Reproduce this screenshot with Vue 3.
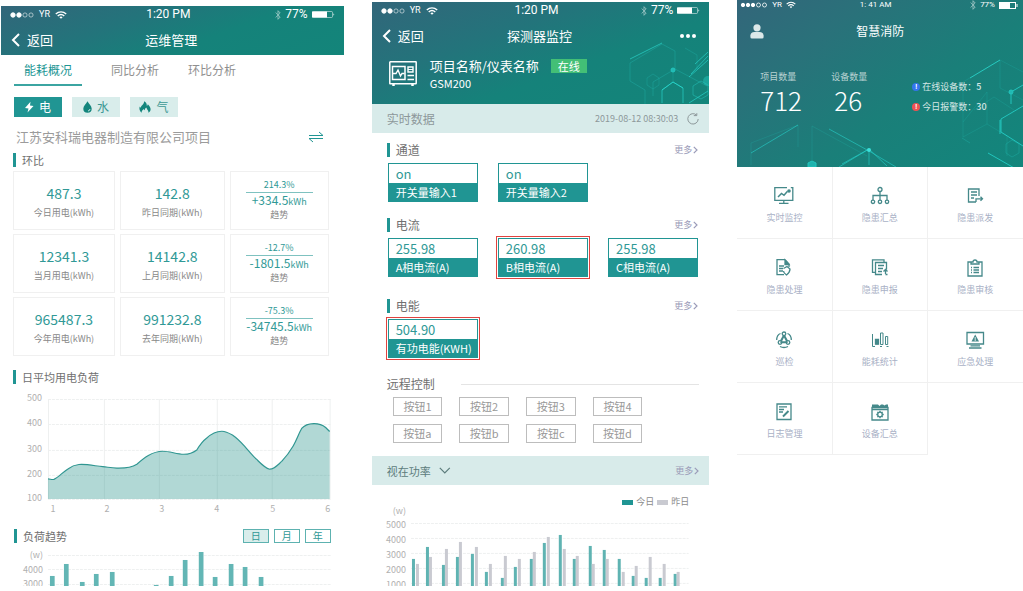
<script setup>
import { ref } from 'vue'

const tabs = ['能耗概况', '同比分析', '环比分析']
const activeTab = ref('能耗概况')
const energies = [
  { id: 'bolt', name: '电' },
  { id: 'drop', name: '水' },
  { id: 'flame', name: '气' }
]
const activeEnergy = ref('bolt')
const periods = ['日', '月', '年']
const activePeriod = ref('日')

const compareRows = [
  { now: '487.3', nowLabel: '今日用电(kWh)', prev: '142.8', prevLabel: '昨日同期(kWh)', rate: '214.3%', diff: '+334.5' },
  { now: '12341.3', nowLabel: '当月用电(kWh)', prev: '14142.8', prevLabel: '上月同期(kWh)', rate: '-12.7%', diff: '-1801.5' },
  { now: '965487.3', nowLabel: '今年用电(kWh)', prev: '991232.8', prevLabel: '去年同期(kWh)', rate: '-75.3%', diff: '-34745.5' }
]

const loadY = [[500, 9], [400, 34], [300, 60], [200, 85], [100, 109]]
const loadX = [[1, 52, 47], [2, 106, 103], [3, 161, 158], [4, 216, 216], [5, 272, 271], [6, 327, 329]]
const curve =
  'M47 89 C49 89 51 90 53 89.5 C58 87 62 82 67 79 C71 76 74 75 78 74.6 C86 74 94 76 102 76.8 C107 77.3 111 78 116 78.2 C123 78.4 130 78 136 74.3 C143 68 151 61.5 162 61.3 C169 61.3 176 64.3 183 64.3 C188 64.3 192 63 196 60 C199 55 202 51 206 48 C211 43.5 215 41.5 221 41.3 C225 41.2 228 43 232 45.3 C236 48 240 52 244 56.5 C248 61 252 66 256 69.5 C260 73.5 264 78 269 79.3 C273 79.5 276 76 281 71.5 C286 66 289 62 292.5 56 C296 50 298 43.5 301 38.5 C304 35 308 33.7 313 33.6 C318 33.5 322 35 325 37.5 L329 41.5'

const trendBars = [
  [51, 30], [65, 18], [81, 36], [95, 28], [111, 26], [155, 39], [170, 30],
  [184, 14], [200, 6], [214, 31], [230, 18], [244, 21], [260, 31]
]

const sections = [
  { title: '通道', items: [
    { value: 'on', label: '开关量输入1' }, { value: 'on', label: '开关量输入2' }
  ] },
  { title: '电流', items: [
    { value: '255.98', label: 'A相电流(A)' },
    { value: '260.98', label: 'B相电流(A)', alarm: true },
    { value: '255.98', label: 'C相电流(A)' }
  ] },
  { title: '电能', items: [{ value: '504.90', label: '有功电能(KWH)', alarm: true }] }
]
const remotes = ['1', '2', '3', '4', 'a', 'b', 'c', 'd'].map((n) => '按钮' + n)
const measure = ref('视在功率')

const powerY = [[5000, 30], [4000, 45], [3000, 60], [2000, 75], [1000, 90]]
const todayBars = [
  [40, 65], [54, 53], [70, 71], [84, 63], [99, 60], [113, 78], [129, 84], [142, 73], [158, 65], [171, 49],
  [187, 41], [201, 65], [217, 52], [231, 56], [246, 65], [260, 82], [273, 84], [287, 84], [302, 80]
]
const yesterdayBars = [
  [44, 70], [57, 63], [73, 55], [87, 48], [103, 53], [117, 70], [132, 62], [146, 65], [161, 58], [175, 43],
  [191, 55], [204, 62], [220, 70], [234, 65], [250, 78], [263, 72], [277, 63], [291, 70], [305, 78]
]

const menu = [
  { id: 'monitor', name: '实时监控' }, { id: 'tree', name: '隐患汇总' }, { id: 'send', name: '隐患派发' },
  { id: 'handle', name: '隐患处理' }, { id: 'report', name: '隐患申报' }, { id: 'review', name: '隐患审核' },
  { id: 'patrol', name: '巡检' }, { id: 'stats', name: '能耗统计' }, { id: 'urgent', name: '应急处理' },
  { id: 'log', name: '日志管理' }, { id: 'device', name: '设备汇总' }
]
</script>

<template>
  <main class="board">
    <!-- 运维管理 -->
    <section class="phone first">
      <header class="head">
        <div class="status">
          <span class="carrier">
            <svg width="24" height="6" viewBox="0 0 24 6" fill="#fff" stroke="#fff"><circle cx="3" cy="3" r="2.2" /><circle cx="9" cy="3" r="2.2" /><g fill="none" stroke-width=".7" opacity=".8"><circle cx="15" cy="3" r="2.1" /><circle cx="21" cy="3" r="2.1" /></g></svg>
            <span class="net">YR</span>
            <svg width="12" height="8" viewBox="0 0 12 8" fill="none" stroke="#fff" stroke-width="1.4"><path d="M.8 3C3.8.2 8.200.2 11.200 3M2.700 5C4.700 3.200 7.300 3.200 9.300 5" /><path d="M6 7.800 4.400 6.200Q6 5 7.600 6.200Z" fill="#fff" stroke="none" /></svg>
          </span>
          <time>1:20 PM</time>
          <span class="power">
            <svg class="dim" width="6" height="10" viewBox="0 0 6 10" fill="none" stroke="#fff" stroke-width=".8"><path d="M.6 2.500 5.200 7 3 9.300V.7L5.200 3 .6 7.500" /></svg>
            <span>77%</span>
            <svg width="23" height="7" viewBox="0 0 23 7"><rect x=".5" y=".5" width="20" height="6" rx="1" fill="none" stroke="#fff" stroke-opacity=".5" /><rect x="0" y=".5" width="15" height="6" fill="#fff" /><path d="M21.500 2.200q1.500 1.300 0 2.600z" fill="#fff" /></svg>
          </span>
        </div>
        <div class="navbar">
          <button class="back" type="button">
            <svg width="9" height="14" viewBox="0 0 9 14" fill="none" stroke="#fff" stroke-width="2"><path d="M8 1 2 7l6 6" /></svg>返回
          </button>
          <h1>运维管理</h1>
        </div>
      </header>

      <nav class="tabs">
        <button v-for="t in tabs" :key="t" type="button" :class="{ on: t === activeTab }" @click="activeTab = t">{{ t }}</button>
      </nav>

      <div class="energies">
        <button v-for="e in energies" :key="e.id" type="button" :class="{ on: e.id === activeEnergy }" @click="activeEnergy = e.id">
          <svg v-if="e.id === 'bolt'" width="9" height="12" viewBox="0 0 9 12"><path d="M5.500.8 0 7l3.500.5L2.500 11.500 8.500 5 5 4.600z" fill="currentColor" /></svg>
          <svg v-else-if="e.id === 'drop'" width="9" height="12" viewBox="0 0 9 12"><path d="M4.500.3C6 3 8.700 5.200 8.700 7.800a4.200 4 0 0 1-8.400 0C.3 5.200 3 3 4.500.3z" fill="#13857c" /><path d="M7 8q-.2 1.800-2 2" fill="none" stroke="#d9edeb" stroke-width=".9" /></svg>
          <svg v-else width="12" height="12" viewBox="0 0 12 12"><path d="M2.600 11.800C.4 10 .1 7.600.7 5.500q.4.9 1 1.300C2 4.200 5.400 3.500 5 .2 7.300 1.300 8 3.200 7.800 5q.9-.5 1-1.800c3 2.600 4.200 6.200.5 8.600C10 8.800 7.500 8.700 7.600 6.500 5.800 7 6 9 5.500 9.200 5 9 5 8.500 5 8 3.500 9 2.600 10 2.600 11.800z" fill="#13857c" /></svg>
          {{ e.name }}
        </button>
      </div>

      <div class="project">
        <span>江苏安科瑞电器制造有限公司项目</span>
        <button type="button" aria-label="切换"><svg width="16" height="12" viewBox="0 0 16 12" fill="none" stroke="#209593"><path d="M1 4.500H15L11 1M15 7.500H1L5 11" /></svg></button>
      </div>

      <h2 class="bar-title">环比</h2>
      <div class="compare">
        <template v-for="r in compareRows" :key="r.now">
          <div class="cell"><b>{{ r.now }}</b><span>{{ r.nowLabel }}</span></div>
          <div class="cell"><b>{{ r.prev }}</b><span>{{ r.prevLabel }}</span></div>
          <div class="cell trend"><em>{{ r.rate }}</em><b>{{ r.diff }}<small>kWh</small></b><span>趋势</span></div>
        </template>
      </div>

      <h2 class="bar-title load">日平均用电负荷</h2>
      <svg class="chart" viewBox="0 0 343 128">
        <g stroke="#eef0f0">
          <path v-for="y in loadY" :key="y[0]" :d="`M47 ${y[1]}.500H330`" stroke-dasharray="3 1" />
          <path v-for="x in loadX" :key="x[0]" :d="`M${x[2]}.500 9V109`" />
        </g>
        <path :d="curve + 'V109H47Z'" fill="#209088" fill-opacity=".35" />
        <path :d="curve" fill="none" stroke="#309691" stroke-width="1.200" />
        <text v-for="y in loadY" :key="'y' + y[0]" x="41" :y="y[1] + 2" text-anchor="end">{{ y[0] }}</text>
        <text v-for="x in loadX" :key="'x' + x[0]" :x="x[1]" y="122" text-anchor="middle">{{ x[0] }}</text>
      </svg>

      <div class="trend-head">
        <h2 class="bar-title">负荷趋势</h2>
        <div class="periods">
          <button v-for="p in periods" :key="p" type="button" :class="{ on: p === activePeriod }" @click="activePeriod = p">{{ p }}</button>
        </div>
      </div>
      <svg class="chart" viewBox="0 0 343 70">
        <path d="M47 9.500H330M47 23.500H330M47 38.500H330" stroke="#eef0f0" stroke-dasharray="3 1" />
        <rect v-for="b in trendBars" :key="b[0]" :x="b[0] - 2" :y="b[1]" width="4.700" :height="70 - b[1]" fill="#63b6b5" />
        <text x="42" y="12" text-anchor="end">(w)</text>
        <text x="42" y="27" text-anchor="end">4000</text>
        <text x="42" y="41" text-anchor="end">3000</text>
      </svg>
    </section>

    <!-- 探测器监控 -->
    <section class="phone second">
      <header class="head">
        <svg class="deco" width="84" height="62" viewBox="0 0 84 62" fill="none" stroke="#23c5bd">
          <path d="M5 21 37 2 50 9M5 21v18l15 9v14M50 9v18l32 17M50 27 28 40v14" opacity=".3" />
          <path d="M37 48 48 40 58 46V61M37 48v13M83 14 66 32" opacity=".8" />
          <path d="M5 17 37 1M37 48 48 40l10 6M70 22 83 10M64 35l19-17M83 49 64 61" stroke="#2be0d6" opacity=".6" />
          <path d="M48 28v12M22 36l6-4 6 4v7l-6 4-6-4zM60 6l12 7v14" opacity=".25" />
          <circle cx="48" cy="28" r="2" fill="#22b9b3" /><circle cx="83" cy="39" r="5" fill="#2be0d6" opacity=".35" stroke="none" />
          <path d="m68 44 8-5 7 4v10l-7 4-8-4z" opacity=".5" />
        </svg>
        <div class="status">
          <span class="carrier">
            <svg width="24" height="6" viewBox="0 0 24 6" fill="#fff" stroke="#fff"><circle cx="3" cy="3" r="2.200" /><circle cx="9" cy="3" r="2.200" /><g fill="none" stroke-width=".7" opacity=".8"><circle cx="15" cy="3" r="2.100" /><circle cx="21" cy="3" r="2.100" /></g></svg>
            <span class="net">YR</span>
            <svg width="12" height="8" viewBox="0 0 12 8" fill="none" stroke="#fff" stroke-width="1.400"><path d="M.8 3C3.800.2 8.200.2 11.200 3M2.700 5C4.700 3.200 7.300 3.200 9.300 5" /><path d="M6 7.800 4.400 6.200Q6 5 7.600 6.200Z" fill="#fff" stroke="none" /></svg>
          </span>
          <time>1:20 PM</time>
          <span class="power">
            <svg class="dim" width="6" height="10" viewBox="0 0 6 10" fill="none" stroke="#fff" stroke-width=".8"><path d="M.6 2.500 5.200 7 3 9.300V.7L5.200 3 .6 7.500" /></svg>
            <span>77%</span>
            <svg width="23" height="7" viewBox="0 0 23 7"><rect x=".5" y=".5" width="20" height="6" rx="1" fill="none" stroke="#fff" stroke-opacity=".5" /><rect x="0" y=".5" width="15" height="6" fill="#fff" /><path d="M21.500 2.200q1.500 1.300 0 2.600z" fill="#fff" /></svg>
          </span>
        </div>
        <div class="navbar">
          <button class="back" type="button">
            <svg width="9" height="14" viewBox="0 0 9 14" fill="none" stroke="#fff" stroke-width="2"><path d="M8 1 2 7l6 6" /></svg>返回
          </button>
          <h1>探测器监控</h1>
          <button class="dots" type="button" aria-label="菜单"><svg width="18" height="6" viewBox="0 0 18 6" fill="#fff"><circle cx="3" cy="3" r="2" /><circle cx="9" cy="3" r="2" /><circle cx="15" cy="3" r="2" /></svg></button>
        </div>
        <div class="device">
          <svg width="28" height="26" viewBox="0 0 28 26" fill="none" stroke="#fff" stroke-width="1.500"><rect x=".8" y=".8" width="26.400" height="22" rx=".5" /><path d="M4.500 23v2M23.500 23v2" stroke-width="2.500" /><path d="M3.500 5.500h12.500v13H3.500z" /><path d="M3.500 12.500h3.500l2-3.500 2.500 6 1.500-2.500h2.500M19 6h5v5h-5zM18.500 14.500H25M18.500 18.500H25" stroke-width="1.400" /><path d="M19 8.500h5" stroke-width="1" /></svg>
          <div>
            <p class="dev-name">项目名称/仪表名称<span class="online">在线</span></p>
            <p class="model">GSM200</p>
          </div>
        </div>
      </header>

      <div class="strip live">
        <span class="live-title">实时数据</span>
        <time>2019-08-12 08:30:03</time>
        <button type="button" aria-label="刷新"><svg width="12" height="12" viewBox="0 0 12 12" fill="none" stroke="#8d989a"><path d="M9.500 2A5.200 5.200 0 1 0 11.200 6M6.800 2.600h3V.2" /></svg></button>
      </div>

      <div v-for="s in sections" :key="s.title" class="group">
        <div class="group-head">
          <h2 class="bar-title">{{ s.title }}</h2>
          <a class="more" href="#">更多<svg width="5" height="8" viewBox="0 0 5 8" fill="none" stroke="currentColor" stroke-width="1.200"><path d="m.8.8 3.200 3.200-3.200 3.200" /></svg></a>
        </div>
        <div class="meters">
          <div v-for="m in s.items" :key="m.label" class="meter" :class="{ alarm: m.alarm }"><b>{{ m.value }}</b><span>{{ m.label }}</span></div>
        </div>
      </div>

      <div class="remote-head"><h2>远程控制</h2><hr></div>
      <div class="remotes"><button v-for="r in remotes" :key="r" type="button">{{ r }}</button></div>

      <div class="strip">
        <span class="picker">
          <select v-model="measure" aria-label="指标"><option>视在功率</option></select>
          <svg width="12" height="7" viewBox="0 0 12 7" fill="none" stroke="#5c7c7c" stroke-width="1.200"><path d="m.8.8 5 5 5-5" /></svg>
        </span>
        <a class="more" href="#">更多<svg width="5" height="8" viewBox="0 0 5 8" fill="none" stroke="currentColor" stroke-width="1.200"><path d="m.8.8 3.200 3.200-3.200 3.200" /></svg></a>
      </div>
      <div class="legend"><i></i>今日<i class="old"></i>昨日</div>
      <svg class="chart power-chart" viewBox="0 0 338 110">
        <g stroke="#eef0f0" stroke-dasharray="3 1"><path v-for="y in powerY" :key="y[0]" :d="`M39 ${y[1] - 1}.500H317`" /></g>
        <rect v-for="b in todayBars" :key="'t' + b[0]" :x="b[0]" :y="b[1]" width="3" :height="110 - b[1]" fill="#5fb3b2" />
        <rect v-for="b in yesterdayBars" :key="'o' + b[0]" :x="b[0]" :y="b[1]" width="3" :height="110 - b[1]" fill="#c9cad1" />
        <text x="34" y="20" text-anchor="end">(w)</text>
        <text v-for="y in powerY" :key="'l' + y[0]" x="34" :y="y[1] + 4" text-anchor="end">{{ y[0] }}</text>
      </svg>
    </section>

    <!-- 智慧消防 -->
    <section class="phone third">
      <header class="head">
        <svg class="deco" width="285" height="167" viewBox="0 0 285 167" preserveAspectRatio="xMaxYMax slice" fill="none" stroke="#23c5bd">
          <path d="M225 82 262 60 285 72M225 82v55l24-13V92M262 60v28l23 12M249 92l-24 30M249 124l20 12v20M236 110l20-13 20 13" opacity=".18" />
          <path d="m232 78 30-18" stroke="#2be0d6" opacity=".7" />
          <path d="M285 85 273 92v12M285 106l-22 13v13l22 14M250 153l28 16M262 120v14" stroke="#25d5cd" opacity=".8" />
          <path d="m224 138 8 5M268 144l6-4 7 4v9l-7 4-6-4z" opacity=".3" />
          <circle cx="273" cy="92" r="2" fill="#22b9b3" />
          <path d="M13 143 60 125v22M13 143v22M74 160V126l55 30" opacity=".18" />
          <path d="m13 153 47-28M91 129l40 22 27 16M104 164l27-15v16M101 167l30-18 18 17" stroke="#27d0ca" opacity=".6" />
          <path d="m70 163 4-2 4 2v4h-8z" fill="#1fb3ae" />
          <circle cx="131" cy="150" r="2" fill="#3be0da" stroke="none" />
        </svg>
        <div class="status">
          <span class="carrier">
            <svg width="28" height="6" viewBox="0 0 28 6" fill="#fff" stroke="#fff"><circle cx="3" cy="3" r="1.700" /><circle cx="8" cy="3" r="1.700" /><circle cx="13" cy="3" r="1.700" /><g fill="none" stroke-width=".8"><circle cx="18.500" cy="3" r="2" /><circle cx="24.500" cy="3" r="2" /></g></svg>
            <span class="net">YR</span>
            <svg width="10" height="8" viewBox="0 0 12 8" fill="none" stroke="#fff" stroke-width="1.400"><path d="M.8 3C3.800.2 8.200.2 11.200 3M2.700 5C4.700 3.200 7.300 3.200 9.300 5" /><path d="M6 7.800 4.400 6.200Q6 5 7.600 6.200Z" fill="#fff" stroke="none" /></svg>
          </span>
          <time>1: 41 AM</time>
          <span class="power">
            <svg class="dim" width="6" height="10" viewBox="0 0 6 10" fill="none" stroke="#fff" stroke-width=".8"><path d="M.6 2.500 5.200 7 3 9.300V.7L5.200 3 .6 7.500" /></svg>
            <span>77%</span>
            <svg width="19" height="7" viewBox="0 0 19 7"><rect x=".5" y=".5" width="16" height="6" fill="none" stroke="#fff" /><rect x="1" y="1" width="10" height="5" fill="#fff" /><path d="M18 2v3" stroke="#fff" /></svg>
          </span>
        </div>
        <div class="user-bar">
          <button type="button" aria-label="用户"><svg width="14" height="15" viewBox="0 0 14 15" fill="#dce8e9"><circle cx="7" cy="3.800" r="3.600" /><path d="M.4 13V11.500Q.6 8 4.500 8h5q3.900 0 4.100 3.500V13q0 1.500-1.500 1.500H2Q.4 14.500.4 13z" /></svg></button>
          <h1>智慧消防</h1>
        </div>
        <div class="totals">
          <div class="total"><span>项目数量</span><b>712</b></div>
          <div class="total"><span>设备数量</span><b>26</b></div>
          <ul>
            <li><i class="info">!</i>在线设备数：<strong>5</strong></li>
            <li><i>!</i>今日报警数：<strong>30</strong></li>
          </ul>
        </div>
      </header>

      <nav class="menu">
        <a v-for="m in menu" :key="m.id" href="#">
          <svg width="20" height="20" viewBox="0 0 20 20" fill="none" stroke="#45898a" stroke-width="1.300">
            <template v-if="m.id === 'monitor'"><path d="M13 1.600H.8v12.800h18V1.600h-2M9.800 14.500V17M5 17.400h9.500" /><path d="m4 11 3.500-3.500 2.500 1.800 3.500-4" stroke-width="1.500" /><circle cx="15" cy="5" r="1.800" fill="#45898a" stroke="none" /></template>
            <template v-else-if="m.id === 'tree'"><circle cx="10" cy="3.500" r="2" /><path d="M10 5.500V14M3 14V9.500h14V14" /><circle cx="3" cy="15.800" r="1.700" /><circle cx="10" cy="15.800" r="1.700" /><circle cx="17" cy="15.800" r="1.700" /></template>
            <template v-else-if="m.id === 'send'"><path d="M14 10V3H3.500v13H11M6 6h6M6 9h6M6 12h3M11 16v-3.200h6.500M15.500 10.800l2 2-2 2" /></template>
            <template v-else-if="m.id === 'handle'"><path d="M11 1.600H3v15h7M11 1.600 15 6v3M5 8h5M5 10.500h4M5 13h4" /><path d="M11 2v4.500h4z" fill="#45898a" /><path d="M9.500 10.500 13 8.500l3 2.500c0 3-1 4-3.500 6Q9.500 15 9.500 13" /></template>
            <template v-else-if="m.id === 'report'"><path d="M14 4V1.800H2.500v12.500H5M12 16.500H5.500V4.500h11v7M8 7.500h6M8 10.500h5M8 13.500h4M15.500 16v-4.500m-2 2 2-2 2 2M17.500 16.500h-2" /></template>
            <template v-else-if="m.id === 'review'"><path d="M6 4H3v14h14V4h-3M6 6V4h2q0-2 2-2t2 2h2v2zM6 9.500h1M8.500 9.500H14M6 12h1M8.500 12H14M6 14.500h1M8.500 14.500H14" /></template>
            <template v-else-if="m.id === 'patrol'"><circle cx="10" cy="3.800" r="1.800" /><circle cx="6" cy="12.500" r="1.800" /><circle cx="14" cy="12.500" r="1.800" /><path d="M9.500 5.500 6.500 11M10.500 5.500l3 5.500M10 6l-3 6h6zM7.800 12.500h4.500M2.700 10Q2.700 5 6.500 3.500M17.300 10q0-5-3.800-6.500M6 16.500q4 2 8 0" /></template>
            <template v-else-if="m.id === 'stats'"><path d="M2.500 4v12.500H5M5.500 9.500h3v4.500h-3zM10.500 3h2.500v11.500h-2.500zM15.500 6.500h2.200v8h-2.200zM10 16.500h2M16.500 16.500h2" stroke-width="1" /><path d="M5.500 9.500h3V14h-3z" fill="#45898a" /></template>
            <template v-else-if="m.id === 'urgent'"><path d="M2 2.500h16.500v11.500H2zM5.500 15.800h9.500M4 18h12.500" /><path d="m10.200 4.500 3.800 7H6.500z" fill="#45898a" stroke="none" /><path d="M10.200 7v4" stroke="#fff" stroke-width=".8" /></template>
            <template v-else-if="m.id === 'log'"><path d="M3 2h14v15.500H3zM5 4.800h8M5 7.500h5M5 10h4" /><path d="m9 14.500 5.500-5.500" stroke-width="2" /></template>
            <template v-else><path d="M2 5.500h16V18H2zM2 7.500h16" /><path d="M2 2.500h6l1.500 1.500L11 2.500h2l1.500 1L16 2.500h2v3H2z" fill="#45898a" stroke="none" /><circle cx="10" cy="12.500" r="2.300" /><path d="M10 8.800v1.500M10 14.700v1.500M6.300 12.500h1.500M12.200 12.500h1.500M7.400 9.900l1 1M11.600 14.100l1 1M12.600 9.900l-1 1M8.400 14.100l-1 1" /></template>
          </svg>
          {{ m.name }}
        </a>
      </nav>
    </section>
  </main>
</template>

<style>
body { margin: 0; background: #fff; }
</style>

<style scoped>
* { box-sizing: border-box; margin: 0; padding: 0; }
.board {
  display: grid; grid-template-columns: 343fr 338fr 286fr; column-gap: 28px;
  height: 100vh; padding: 0 0 5px 1px; overflow: hidden;
  font-family: "Noto Sans CJK SC", sans-serif; font-weight: 400; color: #8f8f8f;
}
.phone { min-width: 0; min-height: 0; overflow: hidden; }
.first { margin-top: 6px; }
.second { margin-top: 2px; }
button, select { font: inherit; color: inherit; background: none; border: 0; border-radius: 0; cursor: pointer; }
a { text-decoration: none; color: inherit; }
svg { display: block; flex: none; }
h1, h2, b, em, i { font-weight: 400; font-style: normal; }

.head { position: relative; overflow: hidden; color: #fff; background: linear-gradient(160deg, #32667a 0%, #23747b 35%, #15827a 62%, #13857a 100%); }
.first .head { height: 49px; }
.second .head { height: 102px; }
.third .head { height: 167px; background: linear-gradient(145deg, #33667a 0%, #2a717a 25%, #1a7f79 60%, #12867c 100%); }
.deco { position: absolute; right: 0; bottom: 0; }
.status { position: relative; display: grid; grid-template-columns: 136fr auto 144fr; align-items: center; height: 17px; padding: 0 9px; font: 400 12px/17px Roboto, sans-serif; }
.carrier, .power { display: flex; align-items: center; }
.carrier { gap: 5px; }
.net { font-size: 9px; }
.power { justify-content: flex-end; gap: 4px; }
.dim { opacity: .6; }
.third .status { height: 10px; padding: 0 5px 0 3px; font: 400 8px/10px Roboto, sans-serif; }
.third .net { font-size: 8px; }
.third .carrier { gap: 4px; }

.navbar { position: relative; display: grid; grid-template-columns: 1fr auto 1fr; align-items: center; height: 34px; padding: 0 12px 0 10px; }
.navbar h1 { font-size: 13px; line-height: 20px; }
.back { display: flex; align-items: center; gap: 7px; font-size: 13px; line-height: 20px; }
.dots { justify-self: end; }

.tabs { display: flex; padding: 0 13px; height: 31px; }
.tabs button { font-size: 12px; line-height: 30px; padding: 0 10px; margin-right: 9px; border-bottom: 2px solid transparent; }
.tabs button + button { margin-left: 10px; }
.tabs button + button + button { margin-left: 0; }
.tabs .on { color: #209593; border-color: #3ba5a2; }
.energies { display: flex; gap: 10px; padding: 11px 13px 0; }
.energies button { display: flex; align-items: center; justify-content: center; gap: 5px; width: 48px; height: 20px; font-size: 12px; line-height: 20px; background: #d9edeb; color: #3c9894; }
.energies .on { background: #209593; color: #fff; }
.project { display: flex; justify-content: space-between; align-items: center; padding: 10px 20px 0 15px; font-size: 13px; line-height: 20px; color: #9b9b9b; }
.bar-title { border-left: 3px solid #209593; padding-left: 6px; font-size: 11px; line-height: 14px; color: #707070; }
.first > .bar-title { margin: 6px 0 0 12px; }
.compare { display: grid; grid-template-columns: 102fr 105fr 99fr; gap: 4px 5px; padding: 4px 15px 0 12px; }
.cell { display: flex; flex-direction: column; align-items: center; height: 59px; padding-top: 11px; border: 1px solid #f0f0f0; }
.cell b { font-size: 14px; line-height: 20px; color: #309996; }
.cell span { margin-top: 3px; font-size: 9px; line-height: 14px; color: #888; }
.trend { padding-top: 6px; }
.cell em { width: 67px; border-bottom: 1px solid #7fc2c0; font-size: 9px; line-height: 14px; text-align: center; color: #309996; }
.trend b { font-size: 12px; line-height: 13px; }
.trend small { font-size: 9px; }
.trend span { margin-top: 0; }
.first > .load { margin-top: 14px; }
.chart { width: 100%; height: auto; }
.chart text { font-size: 9px; fill: #b0b0b0; }
.load + .chart { margin-top: 6px; }
.trend-head { display: flex; justify-content: space-between; align-items: center; margin-top: 11px; padding: 0 13px; }
.periods { display: flex; gap: 5px; }
.periods button { width: 26px; height: 14px; border: 1px solid #5db2b0; font-size: 10px; line-height: 12px; color: #309996; }
.periods .on { background: #d9edeb; }
.trend-head + .chart { margin-top: 3px; }

.device { position: relative; display: flex; align-items: center; gap: 13px; height: 42px; padding: 0 17px; }
.dev-name { display: flex; align-items: center; gap: 12px; font-size: 13px; line-height: 18px; }
.online { width: 36px; height: 14px; background: #43bf76; font-size: 11px; line-height: 14px; text-align: center; }
.model { font-size: 11px; line-height: 16px; }
.strip { display: flex; align-items: center; height: 29px; padding: 0 10px 0 15px; background: #d8ebea; color: #5c7c7c; }
.live { gap: 9px; color: #8d989a; }
.live-title { flex: 1; font-size: 12px; }
.live time { font-size: 9px; }
.group { padding: 10px 11px 0 15px; }
.group + .group { padding-top: 16px; }
.group + .group + .group { padding-top: 22px; }
.group-head { display: flex; justify-content: space-between; align-items: center; }
.group .bar-title { font-size: 12px; }
.more { display: flex; align-items: center; gap: 1px; font-size: 9px; line-height: 14px; color: #9a9bb8; }
.meters { display: grid; grid-template-columns: repeat(3, 90fr); gap: 20px; margin-top: 6px; padding-left: 1px; }
.meter { height: 39px; border: 1px solid #209593; }
.meter b { display: block; padding-left: 7px; font-size: 13px; line-height: 19px; color: #309996; }
.meter span { display: block; padding-left: 7px; font-size: 11px; line-height: 18px; color: #fff; background: #209593; }
.alarm { outline: 1px solid #e0433f; outline-offset: 1px; }
.remote-head { display: flex; align-items: center; gap: 26px; padding: 18px 10px 0 15px; }
.remote-head h2 { font-size: 12px; line-height: 16px; color: #707070; }
.remote-head hr { flex: 1; border: 0; border-top: 1px solid #e4e4e4; }
.remotes { display: grid; grid-template-columns: repeat(4, 1fr); gap: 8px 17px; padding: 5px 67px 13px 21px; }
.remotes button { height: 19px; border: 1px solid #bdbdbd; font-size: 11px; line-height: 17px; color: #999; }
.strip .picker { flex: 1; display: flex; align-items: center; gap: 8px; }
.picker select { appearance: none; font-size: 11px; line-height: 16px; outline: 0; }
.legend { display: flex; align-items: center; justify-content: flex-end; gap: 3px; padding: 10px 20px 0; font-size: 9px; line-height: 14px; color: #8b8b8b; }
.legend i { width: 11px; height: 5px; background: #209593; }
.legend .old { background: #c9cad1; }
.power-chart { margin-top: -15px; }

.user-bar { position: relative; display: grid; grid-template-columns: 1fr auto 1fr; align-items: center; height: 42px; padding: 0 13px; }
.user-bar button { justify-self: start; }
.user-bar h1 { font-size: 12px; line-height: 18px; }
.totals { position: relative; display: flex; padding: 18px 0 0 23px; }
.total { width: 71px; }
.total span { display: block; font-size: 9px; line-height: 14px; color: #b8d2d2; }
.total b { display: block; font-size: 26px; font-weight: 300; line-height: 32px; }
.total + .total b { padding-left: 3px; }
.totals ul { list-style: none; padding: 7px 0 0 10px; color: #d4e6e5; }
.totals li { display: flex; align-items: center; font-size: 9px; line-height: 20px; white-space: nowrap; }
.totals strong { font-weight: 500; }
.totals i { width: 8px; height: 8px; margin-right: 2px; border-radius: 50%; background: #ee5253; color: #fff; font: 700 7px/8px Roboto, sans-serif; text-align: center; }
.totals .info { background: #3575ee; }

.menu { display: grid; grid-template-columns: repeat(3, 1fr); }
.menu a { display: flex; flex-direction: column; align-items: center; gap: 5px; height: 72px; padding-top: 19px; border-right: 1px solid #f0f0f0; border-bottom: 1px solid #f0f0f0; font-size: 9px; line-height: 14px; color: #a9b1c6; }
.menu a:nth-child(3n) { border-right: 0; }
</style>
